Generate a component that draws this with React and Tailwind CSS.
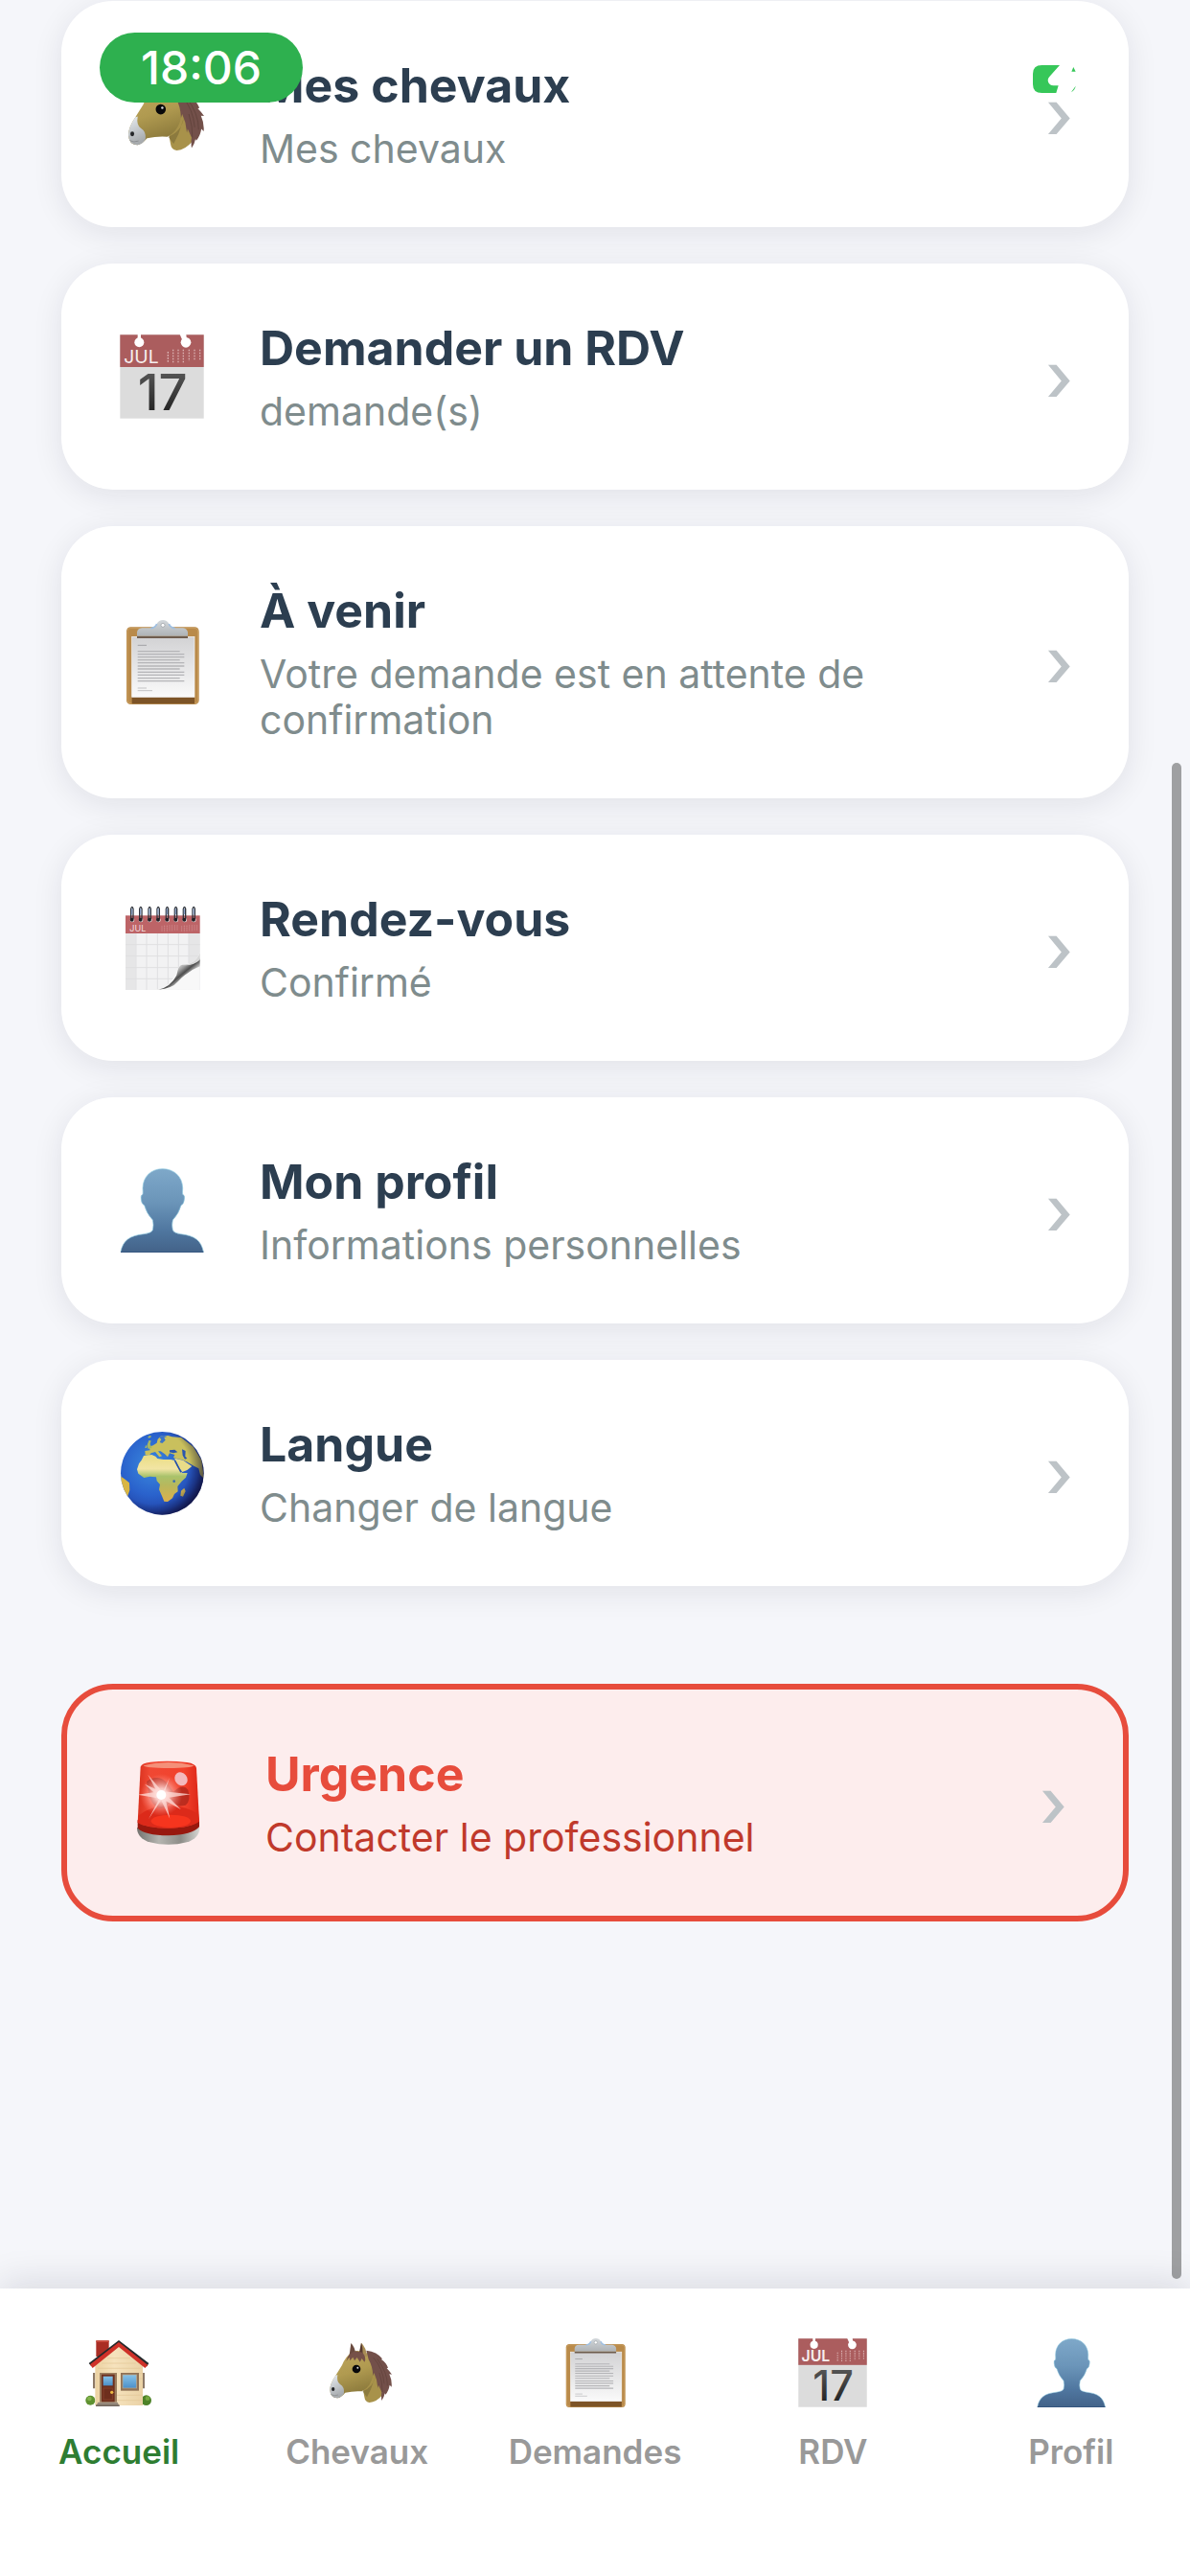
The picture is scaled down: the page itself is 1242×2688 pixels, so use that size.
import clsx from "clsx";

function HorseIcon({ className }) {
  return (
    <svg viewBox="0 0 216 216" className={className} aria-hidden="true">
      <defs>
        <linearGradient id="horseCoat" x1="0" y1="0" x2="0.3" y2="1">
          <stop offset="0" stopColor="#c0a65c" />
          <stop offset="0.55" stopColor="#b09a50" />
          <stop offset="1" stopColor="#8c7a3c" />
        </linearGradient>
        <linearGradient id="horseMuzzle" x1="0" y1="0" x2="0.3" y2="1">
          <stop offset="0" stopColor="#e9eef3" />
          <stop offset="1" stopColor="#a7abae" />
        </linearGradient>
      </defs>
      <path d="M118 55 L160 60 L196 120 L186 178 Q168 200 146 201 Q132 200 130 184 L124 150Z" fill="#a8924a" />
      <path d="M124 166 Q158 154 164 118 L150 160 L138 184Z" fill="#6f6131" opacity=".5" />
      <path d="M92 42 Q70 58 60 84 L40 116 Q22 142 22 162 Q24 188 46 187 Q56 186 70 170 Q96 164 122 166 Q154 150 158 108 L146 50 Q118 34 92 42Z" fill="url(#horseCoat)" />
      <path d="M40 116 Q22 142 22 162 Q24 188 46 187 Q58 186 66 172 Q68 152 54 144 Q42 136 46 114Z" fill="url(#horseMuzzle)" />
      <ellipse cx="32" cy="159" rx="5" ry="6" fill="#25272a" />
      <path d="M26 176 Q36 182 48 177" stroke="#85888a" strokeWidth="2" fill="none" />
      <path d="M83 52 L88 15 Q101 28 102 48Z" fill="#6a4a3f" />
      <path d="M115 52 L120 14 Q136 28 138 58Z" fill="#a98d56" />
      <path d="M113 48 L120 14 Q126 26 124 56Z" fill="#54382f" />
      <path d="M73 72 Q80 44 104 40 L124 44 Q138 62 130 74 L122 63 L116 74 L107 60 L99 70 L94 59 L85 70 L83 59Z" fill="#765148" />
      <path d="M136 38 Q170 42 186 64 L183 66 Q198 76 204 92 L200 94 Q210 104 216 113 L208 112 Q217 132 215 152 L209 146 Q206 165 196 176 L194 172 Q192 184 184 195 Q182 180 184 168 L174 146 L172 156 L168 130 L160 108 L157 118 Q156 88 143 66Z" fill="#73504a" />
      <path d="M158 60 Q188 94 192 142 M170 64 Q203 108 202 148 M177 108 Q187 140 186 168" stroke="#5f413a" strokeWidth="2" fill="none" />
      <circle cx="105" cy="96" r="13" fill="#08080a" />
      <circle cx="109" cy="92" r="3" fill="#d8d8dc" />
    </svg>
  );
}

function DateIcon({ className }) {
  return (
    <svg viewBox="0 0 264 264" className={clsx("overflow-visible", className)} aria-hidden="true">
      <defs>
        <linearGradient id="dateInk" x1="0" y1="0" x2="0" y2="1">
          <stop offset="0" stopColor="#636363" />
          <stop offset="1" stopColor="#161616" />
        </linearGradient>
      </defs>
      <rect x="1" y="1" width="262" height="262" fill="#dcdcdc" />
      <rect x="1" y="1" width="262" height="101" fill="#ab5d5e" />
      <rect x="56" y="0" width="10" height="20" fill="#fff" />
      <circle cx="61" cy="25" r="15" fill="#fff" />
      <path d="M188 0 L208 0 L210 16 L196 18Z" fill="#fff" />
      <circle cx="207" cy="25" r="16" fill="#fff" />
      <text x="13" y="89" fontSize="58" fill="#f6eeee" className="font-[Inter,sans-serif]">JUL</text>
      <g stroke="#dcb4b4" strokeWidth="4" strokeDasharray="5 4">
        <path d="M151 54V90M167 47V90M183 47V90M199 47V90M217 47V84M234 47V82M251 47V82" />
      </g>
      <text x="134" y="238" fontSize="158" textAnchor="middle" fill="url(#dateInk)" className="font-[Inter,sans-serif] font-medium">17</text>
    </svg>
  );
}

function ClipboardIcon({ className }) {
  const lines = [98, 107, 116, 125, 134, 144, 153, 163, 172, 182, 191];
  return (
    <svg viewBox="0 0 264 264" className={className} aria-hidden="true">
      <defs>
        <linearGradient id="clipPaper" x1="0" y1="0" x2="0" y2="1">
          <stop offset="0" stopColor="#d2d2d4" />
          <stop offset="1" stopColor="#fafafa" />
        </linearGradient>
        <linearGradient id="clipMetal" x1="0" y1="0" x2="0" y2="1">
          <stop offset="0" stopColor="#d3d8dc" />
          <stop offset="1" stopColor="#aeb2b5" />
        </linearGradient>
      </defs>
      <rect x="21" y="22" width="227" height="242" rx="13" fill="#b98a4a" />
      <rect x="24" y="25" width="221" height="236" rx="11" fill="none" stroke="#c99e60" strokeWidth="3" />
      <rect x="38" y="238" width="196" height="24" fill="#7d5427" />
      <rect x="38" y="52" width="196" height="189" fill="url(#clipPaper)" stroke="#f6f6f6" strokeWidth="2" />
      <path d="M56 79H84" stroke="#a2a2a5" strokeWidth="3" />
      {lines.map((y, i) => (
        <path key={y} d={`M56 ${y}H${i % 3 === 0 ? 188 : 202}`} stroke="#b4b4b7" strokeWidth="4" />
      ))}
      <path d="M56 213H84M56 221H102" stroke="#c2c2c4" strokeWidth="3" />
      <path d="M54 50H213V57H54Z" fill="#6f5d4e" />
      <path d="M54 50V38Q56 26 70 25H96Q112 24 116 12Q122 0 135 0Q148 0 154 12Q158 24 174 25H198Q211 27 213 38V50Z" fill="url(#clipMetal)" />
      <path d="M97 26Q112 24 116 12M173 26Q158 24 154 12" stroke="#9ebfe2" strokeWidth="5" fill="none" />
      <circle cx="135" cy="16" r="6" fill="#fff" stroke="#94999d" strokeWidth="2" />
    </svg>
  );
}

function SpiralCalendarIcon({ className }) {
  const rings = [38, 65, 93, 120, 148, 175, 202, 231];
  return (
    <svg viewBox="0 0 264 264" className={clsx("overflow-visible", className)} aria-hidden="true">
      <defs>
        <linearGradient id="pageCurl" gradientUnits="userSpaceOnUse" x1="172" y1="190" x2="215" y2="242">
          <stop offset="0" stopColor="#f2f2f2" />
          <stop offset="0.3" stopColor="#9a9a9a" />
          <stop offset="0.5" stopColor="#4d4d4d" />
          <stop offset="0.7" stopColor="#b9b9b9" />
          <stop offset="1" stopColor="#ececec" />
        </linearGradient>
      </defs>
      <rect x="18" y="31" width="233" height="233" fill="#f2f2f3" />
      <path d="M18 87H50V264H18ZM216 87H251V264H216Z" fill="#e6e6e7" />
      <path d="M51 87V264M84 87V264M118 87V264M151 87V264M184 87V264M216 87V264M18 122H251M18 158H251M18 194H251M18 229H251" stroke="#dfdfe1" strokeWidth="3" />
      <rect x="18" y="31" width="233" height="56" fill="#bd6467" />
      <text x="31" y="82" fontSize="27" fill="#f3dede" className="font-[Inter,sans-serif]">JUL</text>
      <path d="M132 64V82M140 62V82M148 62V82M156 61V80M164 61V80M172 61V78M180 61V78M194 64V82M202 62V82M210 62V82M218 61V80M226 61V80M234 61V78M242 61V78" stroke="#d08c8e" strokeWidth="3" strokeDasharray="4 2" />
      <path d="M110 263Q150 262 172 220Q184 188 196 184Q240 184 251 145V264Z" fill="#f8f8f8" />
      <path d="M120 263Q160 254 178 218Q184 184 196 185Q238 188 251 166V190Q210 206 182 238Q164 260 120 263Z" fill="url(#pageCurl)" />
      <path d="M196 186Q238 184 251 148V170Q226 190 196 186Z" fill="#d8d8d8" />
      {rings.map((x) => (
        <g key={x}>
          <circle cx={x + 1} cy="45" r="7" fill="#f3eaea" />
          <path d={`M${x - 3} 46V10Q${x} -2 ${x + 4} 10V42`} stroke="#30343c" strokeWidth="4" fill="none" />
          <path d={`M${x} 10V28`} stroke="#8da4c8" strokeWidth="4" />
          <circle cx={x} cy="44" r="6" fill="#221f25" />
        </g>
      ))}
    </svg>
  );
}

function PersonIcon({ className }) {
  return (
    <svg viewBox="0 0 264 264" className={className} aria-hidden="true">
      <defs>
        <linearGradient id="personFill" x1="0" y1="0" x2="0" y2="1">
          <stop offset="0" stopColor="#7ea8c9" />
          <stop offset="0.4" stopColor="#6b95b9" />
          <stop offset="0.75" stopColor="#4f769f" />
          <stop offset="1" stopColor="#436389" />
        </linearGradient>
      </defs>
      <path d="M134 2C98 2 73 26 72 62Q73 76 72 82Q64 84 67 98Q68 112 77 116Q84 142 103 162Q107 178 103 194Q98 203 76 206C30 211 10 226 3 262H262C255 226 235 211 190 206Q170 203 166 194Q162 178 166 162Q185 142 192 116Q201 112 202 98Q205 84 197 82Q196 76 197 62C196 26 170 2 134 2Z" fill="url(#personFill)" stroke="#8ec9e0" strokeWidth="2" />
      <path d="M3 262H262" stroke="#34557e" strokeWidth="4" />
    </svg>
  );
}

function GlobeIcon({ className }) {
  return (
    <svg viewBox="0 0 264 264" className={className} aria-hidden="true">
      <defs>
        <radialGradient id="sea" cx="0.38" cy="0.4" r="0.66">
          <stop offset="0" stopColor="#3b8ade" />
          <stop offset="0.55" stopColor="#2a62cc" />
          <stop offset="0.85" stopColor="#2348ad" />
          <stop offset="1" stopColor="#1f2a72" />
        </radialGradient>
        <linearGradient id="africa" x1="0" y1="0" x2="0" y2="1">
          <stop offset="0" stopColor="#e9dc83" />
          <stop offset="0.3" stopColor="#f2e5a4" />
          <stop offset="0.46" stopColor="#a9c26b" />
          <stop offset="0.65" stopColor="#b8b85c" />
          <stop offset="1" stopColor="#dcb04c" />
        </linearGradient>
        <radialGradient id="globeShade" cx="0.38" cy="0.42" r="0.64">
          <stop offset="0.7" stopColor="#0a0a30" stopOpacity="0" />
          <stop offset="1" stopColor="#0a0a30" stopOpacity="0.65" />
        </radialGradient>
        <clipPath id="globeClip">
          <circle cx="133" cy="133" r="130" />
        </clipPath>
      </defs>
      <circle cx="133" cy="133" r="130" fill="url(#sea)" />
      <g clipPath="url(#globeClip)">
        <path d="M80 76L79 63L95 61L91 51L104 46L116 38L119 26L128 17L151 15L164 19L192 21L230 50L256 92L264 150L252 138L247 118L232 110L212 98L196 91L180 88L168 84L172 75L156 70L150 82L141 73L128 64L120 64L132 79L124 82L111 66L98 70L92 77Z" fill="#c9c05d" />
        <path d="M75 78L100 75L112 80L118 87L137 90L160 90L172 93L180 112L190 126L196 132L212 132L207 146L194 158L181 174L182 190L171 198L165 211L150 222L139 221L132 204L123 184L126 168L116 157L114 145L94 143L76 147L58 134L54 121L60 103L68 92Z" fill="url(#africa)" />
        <path d="M171 86L198 92L211 101L226 111L211 123L196 129L188 118Z" fill="#e9dc88" />
        <path d="M202 179L206 189L198 206L190 203L192 188Z" fill="#cbb151" />
        <path d="M0 140L14 150L30 163L31 186L25 204L18 215L0 190Z" fill="#d9b643" />
        <path d="M86 44L91 30L98 31L95 42L101 54L88 56ZM81 46L86 47L84 54L79 54ZM88 18L97 14L98 20L90 23Z" fill="#a7b763" />
        <path d="M156 61L172 59L181 67L168 70L156 67ZM195 58L206 63L205 80L211 86L204 89L197 77Z" fill="#2a56ae" />
        <path d="M123 20L130 27L125 36L133 39L143 29L139 21L148 18L137 15Z" fill="#3c74c8" />
        <path d="M170 94L175 93L193 128L190 131Z" fill="#294fa5" />
        <circle cx="170" cy="158" r="4" fill="#3c6db0" />
      </g>
      <circle cx="133" cy="133" r="130" fill="url(#globeShade)" />
    </svg>
  );
}

function SirenIcon({ className }) {
  return (
    <svg viewBox="0 0 264 264" className={className} aria-hidden="true">
      <defs>
        <linearGradient id="sirenGlass" x1="0" y1="0" x2="1" y2="0">
          <stop offset="0" stopColor="#d9321f" />
          <stop offset="0.2" stopColor="#f04833" />
          <stop offset="0.75" stopColor="#f2412c" />
          <stop offset="1" stopColor="#dd2718" />
        </linearGradient>
        <linearGradient id="sirenBase" x1="0" y1="0" x2="1" y2="0">
          <stop offset="0" stopColor="#73736f" />
          <stop offset="0.35" stopColor="#b5b5b0" />
          <stop offset="0.7" stopColor="#8d8d88" />
          <stop offset="1" stopColor="#d7d7d4" />
        </linearGradient>
        <radialGradient id="sirenGlow">
          <stop offset="0" stopColor="#fff" />
          <stop offset="0.3" stopColor="#ffd9d5" stopOpacity="0.9" />
          <stop offset="1" stopColor="#ff8c80" stopOpacity="0" />
        </radialGradient>
      </defs>
      <path d="M36 210Q36 244 76 256Q134 271 192 256Q232 244 232 210Z" fill="url(#sirenBase)" />
      <path d="M38 186V212Q60 234 134 235Q208 234 231 208V186Z" fill="#98190f" />
      <path d="M47 20Q50 8 78 5Q134 -1 192 6Q220 10 222 24L231 190Q208 211 134 212Q62 210 38 194Z" fill="url(#sirenGlass)" />
      <path d="M42 172Q80 142 134 142Q190 142 228 168L231 190Q208 211 134 212Q62 210 38 194Z" fill="#dc2a1a" />
      <ellipse cx="142" cy="190" rx="62" ry="20" fill="#ff3a20" opacity=".75" />
      <path d="M56 16Q134 -4 214 16Q206 24 134 24Q66 24 56 16Z" fill="#f49079" />
      <path d="M66 66Q100 40 130 70L150 98Q180 70 196 92Q206 126 188 140Q160 148 142 130Q104 176 76 118Z" fill="#9a2018" opacity=".6" />
      <ellipse cx="174" cy="58" rx="19" ry="22" fill="#f3b9bd" transform="rotate(-38 174 58)" />
      <circle cx="112" cy="108" r="66" fill="url(#sirenGlow)" />
      <path d="M112 96L204 106L112 120L38 107ZM104 108L70 44L122 106L139 182ZM114 104L138 54L116 118L72 184ZM104 114L60 74L122 102L174 154Z" fill="#ffdeda" opacity=".75" />
      <circle cx="112" cy="108" r="15" fill="#fff" />
    </svg>
  );
}

function HouseIcon({ className }) {
  return (
    <svg viewBox="0 0 216 216" className={className} aria-hidden="true">
      <defs>
        <linearGradient id="houseWall" x1="0" y1="0" x2="1" y2="0">
          <stop offset="0" stopColor="#ecd2a2" />
          <stop offset="0.4" stopColor="#f6e3bd" />
          <stop offset="1" stopColor="#ead2a6" />
        </linearGradient>
        <linearGradient id="houseGlass" x1="0" y1="0" x2="0" y2="1">
          <stop offset="0" stopColor="#87c3e8" />
          <stop offset="1" stopColor="#4b8fc8" />
        </linearGradient>
      </defs>
      <rect x="37" y="7" width="40" height="50" fill="#a92d24" />
      <rect x="37" y="7" width="40" height="5" fill="#c94a3d" />
      <circle cx="19" cy="194" r="15" fill="#5e9130" />
      <circle cx="194" cy="194" r="16" fill="#4d8228" />
      <circle cx="16" cy="189" r="7" fill="#82b34c" />
      <circle cx="198" cy="188" r="7" fill="#74a741" />
      <path d="M27 108H34V157H27ZM182 108H189V157H182Z" fill="#8d7967" />
      <path d="M34 72L108 22L183 72V210H34Z" fill="url(#houseWall)" />
      <path d="M72 62H144M54 78H162M42 94H176M170 110H182M170 126H182M102 178H182M102 194H182" stroke="#e2c797" strokeWidth="2" />
      <path d="M14 78L108 6L202 78L196 88L108 22L22 88Z" fill="#26292b" />
      <path d="M18 82L108 12L199 84L190 93L108 27L26 93Z" fill="#cf3128" />
      <rect x="48" y="108" width="54" height="92" fill="#9b7d5e" />
      <rect x="54" y="113" width="41" height="86" fill="#6e2f1d" />
      <rect x="59" y="119" width="30" height="29" fill="url(#houseGlass)" />
      <rect x="60" y="156" width="28" height="36" fill="none" stroke="#84402a" strokeWidth="3" />
      <circle cx="86" cy="169" r="5" fill="#edb942" />
      <path d="M43 200H104L110 213H36Z" fill="#96897b" />
      <path d="M36 208H110V213H36Z" fill="#756a60" />
      <rect x="114" y="108" width="57" height="56" fill="#8f7256" />
      <rect x="120" y="114" width="44" height="42" fill="url(#houseGlass)" stroke="#c3a783" strokeWidth="2" />
    </svg>
  );
}

const menuItems = [
  { title: "Mes chevaux", subtitle: "Mes chevaux", icon: HorseIcon },
  { title: "Demander un RDV", subtitle: "demande(s)", icon: DateIcon },
  {
    title: "À venir",
    subtitle: "Votre demande est en attente de confirmation",
    icon: ClipboardIcon,
  },
  { title: "Rendez-vous", subtitle: "Confirmé", icon: SpiralCalendarIcon },
  { title: "Mon profil", subtitle: "Informations personnelles", icon: PersonIcon },
  { title: "Langue", subtitle: "Changer de langue", icon: GlobeIcon },
];

const tabs = [
  { label: "Accueil", icon: HouseIcon, active: true },
  { label: "Chevaux", icon: HorseIcon },
  { label: "Demandes", icon: ClipboardIcon },
  { label: "RDV", icon: DateIcon },
  { label: "Profil", icon: PersonIcon },
];

function MenuCard({ title, subtitle, icon: Icon, urgent }) {
  return (
    <button
      type="button"
      className={clsx(
        "flex w-full items-center rounded-[54px] py-[58px] pr-[58px] pl-[61px] text-left",
        urgent
          ? "mt-16 border-6 border-[#e74c3c] bg-[#fdeded]"
          : "bg-white shadow-[0_6px_32px_rgba(20,20,40,0.09)]"
      )}
    >
      <Icon className="size-[88px] shrink-0" />
      <span className="ml-[58px] flex flex-1 flex-col gap-3">
        <span
          className={clsx(
            "text-[50px] leading-[60px] font-bold",
            urgent ? "text-[#e74c3c]" : "text-[#2c3e50]"
          )}
        >
          {title}
        </span>
        <span
          className={clsx(
            "text-[41px] leading-[48px]",
            urgent ? "text-[#c0392b]" : "text-[#7f8c8d]"
          )}
        >
          {subtitle}
        </span>
      </span>
      <span className="text-[72px] leading-[72px] font-medium text-[#bdc3c7]" aria-hidden="true">
        ›
      </span>
    </button>
  );
}

function StatusBar() {
  return (
    <div className="absolute inset-x-0 top-0 z-20 flex items-start justify-between pt-[34px] pr-[118px] pl-[104px]">
      <time className="flex h-[73px] w-[212px] items-center justify-center rounded-full bg-[#2eb04f] text-[48px] font-medium text-white">
        18:06
      </time>
      <svg viewBox="292 204 138 87" className="mt-[34px] h-[29px] w-[46px]" fill="#36c759" aria-hidden="true">
        <path d="M320 204H376L344 240Q336 248 341 259Q346 268 356 268H372L365 291H320Q292 291 292 264V231Q292 204 320 204Z" />
        <path d="M413 224L419 210L426 224ZM412 289L426 269Q424 281 412 289Z" />
      </svg>
    </div>
  );
}

function TabBar() {
  return (
    <nav className="relative z-10 flex h-[300px] shrink-0 bg-white pt-[52px] shadow-[0_-6px_36px_rgba(20,20,40,0.12)]">
      {tabs.map(({ label, icon: Icon, active }) => (
        <a
          key={label}
          href="#"
          aria-current={active ? "page" : undefined}
          className={clsx(
            "flex flex-1 flex-col items-center gap-[26px] text-[35px] leading-[40px] font-semibold",
            active ? "text-[#2e7d32]" : "text-[#999999]"
          )}
        >
          <Icon className="size-[72px]" />
          {label}
        </a>
      ))}
    </nav>
  );
}

export default function App() {
  return (
    <div className="relative flex h-screen flex-col overflow-hidden bg-[#f5f6fa] font-[Inter,sans-serif]">
      <StatusBar />
      <main className="relative min-h-0 flex-1 overflow-hidden">
        <div className="flex flex-col gap-[38px] px-16 pt-px">
          {menuItems.map((item) => (
            <MenuCard key={item.title} {...item} />
          ))}
          <MenuCard title="Urgence" subtitle="Contacter le professionnel" icon={SirenIcon} urgent />
        </div>
        {/* Scroll indicator */}
        <div className="absolute top-1/3 right-[9px] bottom-[10px] w-[10px] rounded-full bg-[#9fa0a2]" />
      </main>
      <TabBar />
    </div>
  );
}
